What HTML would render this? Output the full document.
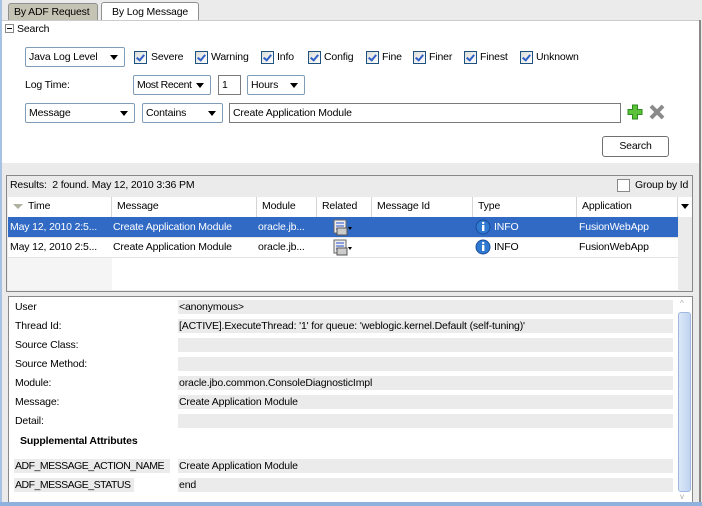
<!DOCTYPE html><html><head><style>
*{box-sizing:border-box;margin:0;padding:0}
body{width:702px;height:506px;background:#ebebeb;font-family:"Liberation Sans","DejaVu Sans",sans-serif;font-size:10.5px;letter-spacing:-0.15px;color:#000;position:relative;overflow:hidden}
.a{position:absolute;white-space:nowrap}
.sel,.inp{position:absolute;height:20px;border:1px solid #7f9db9;background:#fff;border-radius:2px;padding:3px 0 0 3px;}
.inp{border-radius:0;border-color:#7a7a7a}
.sel:after{content:"";position:absolute;right:6px;top:7px;border-left:4px solid transparent;border-right:4px solid transparent;border-top:5px solid #000}
.cb{position:absolute;width:13px;height:13px;border:1px solid #1c5180;background:linear-gradient(135deg,#dcdcd7,#fff)}
.cb:after{content:"";position:absolute;left:3px;top:1px;width:3px;height:6px;border:solid #3060c8;border-width:0 2px 2px 0;transform:rotate(40deg)}
.th{position:absolute;top:197px;height:20px;border-right:1px solid #d5d5d5;padding:3px 0 0 5px;background:#fff}
.lbl{position:absolute;left:15px}
.val{position:absolute;left:178px;width:495px;height:14px;background:#ebebeb;padding:0 0 0 1px;line-height:14px}
</style></head><body>
<div class="a" style="left:0;top:0;width:2px;height:506px;background:#a7c2e3"></div>
<div class="a" style="left:8px;top:3px;width:90px;height:17px;background:#c5c4b4;border:1px solid #909090;border-bottom:none;border-radius:3px 3px 0 0;padding:2px 0 0 5px">By ADF Request</div>
<div class="a" style="left:101px;top:2px;width:98px;height:19px;background:#fff;border:1px solid #909090;border-bottom:none;border-radius:3px 3px 0 0;padding:3px 0 0 10px">By Log Message</div>
<div class="a" style="left:2px;top:20px;width:697px;height:143px;background:#fff;border-top:1px solid #ccc"></div>
<div class="a" style="left:699px;top:20px;width:2px;height:486px;background:#888"></div>
<div class="a" style="left:5px;top:24px;width:9px;height:9px;border:1px solid #888;background:#fff"></div>
<div class="a" style="left:7px;top:28px;width:5px;height:1px;background:#000"></div>
<div class="a" style="left:17px;top:23px">Search</div>
<div class="sel" style="left:25px;top:47px;width:100px">Java Log Level</div>
<div class="cb" style="left:134px;top:51px"></div><div class="a" style="left:151px;top:51px">Severe</div>
<div class="cb" style="left:195px;top:51px"></div><div class="a" style="left:211px;top:51px">Warning</div>
<div class="cb" style="left:261px;top:51px"></div><div class="a" style="left:277px;top:51px">Info</div>
<div class="cb" style="left:308px;top:51px"></div><div class="a" style="left:324px;top:51px">Config</div>
<div class="cb" style="left:366px;top:51px"></div><div class="a" style="left:382px;top:51px">Fine</div>
<div class="cb" style="left:413px;top:51px"></div><div class="a" style="left:429px;top:51px">Finer</div>
<div class="cb" style="left:464px;top:51px"></div><div class="a" style="left:480px;top:51px">Finest</div>
<div class="cb" style="left:520px;top:51px"></div><div class="a" style="left:536px;top:51px">Unknown</div>
<div class="a" style="left:25px;top:79px">Log Time:</div>
<div class="sel" style="left:133px;top:75px;width:78px;letter-spacing:-0.4px">Most Recent</div>
<div class="inp" style="left:218px;top:75px;width:23px">1</div>
<div class="sel" style="left:247px;top:75px;width:58px">Hours</div>
<div class="sel" style="left:25px;top:103px;width:110px">Message</div>
<div class="sel" style="left:142px;top:103px;width:81px">Contains</div>
<div class="inp" style="left:229px;top:103px;width:392px">Create Application Module</div>
<svg class="a" style="left:627px;top:104px" width="16" height="16"><path d="M5.5 1h5v4.5h4.5v5h-4.5v4.5h-5v-4.5h-4.5v-5h4.5z" fill="#5cc23a" stroke="#2e8a1e"/></svg>
<svg class="a" style="left:649px;top:104px" width="16" height="16"><path d="M2 2L14 14M14 2L2 14" stroke="#8a8a8a" stroke-width="4"/></svg>
<div class="a" style="left:602px;top:136px;width:67px;height:21px;border:1px solid #707070;border-radius:3px;background:#fff;text-align:center;padding-top:3px">Search</div>
<!-- results -->
<div class="a" style="left:6px;top:175px;width:687px;height:117px;border:1px solid #888;background:#ebebeb"></div>
<div class="a" style="left:10px;top:179px">Results:&nbsp; 2 found. May 12, 2010 3:36 PM</div>
<div class="a" style="left:617px;top:179px;width:13px;height:13px;border:1px solid #888;background:#fff"></div>
<div class="a" style="left:635px;top:179px">Group by Id</div>
<div class="a" style="left:8px;top:197px;width:670px;height:93px;background:#fff"></div>
<div class="a" style="left:8px;top:257px;width:104px;height:33px;background:#f5f5f5"></div>
<div class="th" style="left:8px;width:104px;padding-left:20px">Time</div>
<div class="a" style="left:13px;top:204px;border-left:5px solid transparent;border-right:5px solid transparent;border-top:5px solid #b0b0a0"></div>
<div class="th" style="left:112px;width:145px">Message</div>
<div class="th" style="left:257px;width:60px">Module</div>
<div class="th" style="left:317px;width:55px">Related</div>
<div class="th" style="left:372px;width:101px">Message Id</div>
<div class="th" style="left:473px;width:104px">Type</div>
<div class="th" style="left:577px;width:101px">Application</div>
<div class="a" style="left:678px;top:197px;width:14px;height:20px;background:#fff"></div>
<div class="a" style="left:681px;top:204px;border-left:4px solid transparent;border-right:4px solid transparent;border-top:5px solid #000"></div>
<div class="a" style="left:8px;top:217px;width:670px;height:20px;background:#316ac5"></div>
<div class="a" style="left:8px;top:237px;width:670px;height:1px;background:#e4e4e4"></div>
<div class="a" style="left:8px;top:257px;width:670px;height:1px;background:#e4e4e4"></div>
<div class="a" style="left:10px;top:221px;color:#fff">May 12, 2010 2:5...</div>
<div class="a" style="left:113px;top:221px;color:#fff">Create Application Module</div>
<div class="a" style="left:258px;top:221px;color:#fff">oracle.jb...</div>
<div class="a" style="left:494px;top:221px;color:#fff">INFO</div>
<div class="a" style="left:579px;top:221px;color:#fff">FusionWebApp</div>
<div class="a" style="left:10px;top:241px">May 12, 2010 2:5...</div>
<div class="a" style="left:113px;top:241px">Create Application Module</div>
<div class="a" style="left:258px;top:241px">oracle.jb...</div>
<div class="a" style="left:494px;top:241px">INFO</div>
<div class="a" style="left:579px;top:241px">FusionWebApp</div>
<svg class="a" style="left:333px;top:219px" width="20" height="38"><g id="r"><rect x="1" y="1" width="12" height="13" fill="#eee" stroke="#666"/><path d="M3 4h8M3 7h8M3 10h6" stroke="#2850d0"/><rect x="4" y="9" width="10" height="7" fill="#ccc" stroke="#555"/><path d="M15 8l4 0l-2 3z" fill="#000"/></g><use href="#r" y="20"/></svg>
<svg class="a" style="left:475px;top:219px" width="16" height="38"><g id="i"><circle cx="8" cy="8" r="7" fill="#2f79d0" stroke="#1a4c9a"/><rect x="7" y="6" width="2.4" height="6" fill="#fff"/><circle cx="8.2" cy="4" r="1.2" fill="#fff"/></g><use href="#i" y="20"/></svg>
<!-- details -->
<div class="a" style="left:8px;top:296px;width:685px;height:207px;border:1px solid #888;background:#fff"></div>
<div class="lbl a" style="top:301px">User</div><div class="val" style="top:300px">&lt;anonymous&gt;</div>
<div class="lbl a" style="top:320px">Thread Id:</div><div class="val" style="top:319px">[ACTIVE].ExecuteThread: '1' for queue: 'weblogic.kernel.Default (self-tuning)'</div>
<div class="lbl a" style="top:339px">Source Class:</div><div class="val" style="top:338px"></div>
<div class="lbl a" style="top:358px">Source Method:</div><div class="val" style="top:357px"></div>
<div class="lbl a" style="top:377px">Module:</div><div class="val" style="top:376px">oracle.jbo.common.ConsoleDiagnosticImpl</div>
<div class="lbl a" style="top:396px">Message:</div><div class="val" style="top:395px">Create Application Module</div>
<div class="lbl a" style="top:415px">Detail:</div><div class="val" style="top:414px"></div>
<div class="a" style="left:20px;top:435px;font-weight:bold">Supplemental Attributes</div>
<div class="a" style="left:14px;top:459px;width:156px;height:14px;background:#ebebeb;padding-left:1px;line-height:14px;letter-spacing:-0.5px">ADF_MESSAGE_ACTION_NAME</div><div class="val" style="top:459px">Create Application Module</div>
<div class="a" style="left:14px;top:478px;width:120px;height:14px;background:#ebebeb;padding-left:1px;line-height:14px;letter-spacing:-0.5px">ADF_MESSAGE_STATUS</div><div class="val" style="top:478px">end</div>
<div class="a" style="left:677px;top:297px;width:15px;height:205px;background:#fff"></div>
<div class="a" style="left:680px;top:299px;font-size:8px;color:#aaa">^</div>
<div class="a" style="left:678px;top:312px;width:13px;height:180px;border:1px solid #a0b8e0;border-radius:3px;background:linear-gradient(90deg,#dbe7f8,#c0d4f0)"></div>
<div class="a" style="left:680px;top:492px;font-size:8px;color:#aaa">v</div>
<div class="a" style="left:0;top:502px;width:702px;height:4px;background:#8fb1de"></div>
</body></html>
